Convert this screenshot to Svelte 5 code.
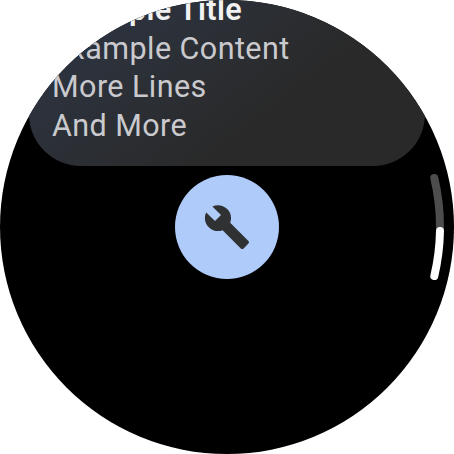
<script>
  const lines = ['Example Content', 'More Lines', 'And More'];
</script>

<main class="watch">
  <section class="card">
    <h1>Example Title</h1>
    {#each lines as line}
      <p>{line}</p>
    {/each}
  </section>

  <button class="action" aria-label="Settings">
    <svg viewBox="0 0 24 24" width="48" height="48" aria-hidden="true">
      <path d="M22.7 19l-9.1-9.1c.9-2.3.4-5-1.5-6.9-2-2-5-2.4-7.4-1.3L9 6 6 9 1.6 4.7C.4 7.1.9 10.1 2.9 12.1c1.9 1.9 4.6 2.4 6.9 1.5l9.1 9.1c.4.4 1 .4 1.4 0l2.3-2.3c.5-.4.5-1.1.1-1.4z" />
    </svg>
  </button>

  <svg class="scroll" viewBox="0 0 454 454" width="454" height="454" aria-hidden="true">
    <path class="track" d="M434.3 178A213 213 0 0 1 440 227" />
    <path class="thumb" d="M440 231A213 213 0 0 1 434.3 276" />
  </svg>
</main>

<style>
  :global(body) {
    background: #fff;
  }

  .watch {
    position: relative;
    display: flex;
    flex-direction: column;
    align-items: center;
    width: 454px;
    height: 454px;
    overflow: hidden;
    border-radius: 50%;
    background: #000;
    font-family: Roboto, sans-serif;
  }

  .card {
    box-sizing: border-box;
    flex: none;
    width: 396px;
    height: 218px;
    margin-top: -52px;
    padding: 43px 23px 0;
    border-radius: 52px;
    background: linear-gradient(142deg, #2d3442 20%, #2b2e33 48%, #292929 68%);
  }

  h1,
  p {
    margin: 0;
    font-size: 30.5px;
    line-height: 38.5px;
    white-space: nowrap;
  }

  h1 {
    color: #f1f1f1;
    font-weight: 600;
    letter-spacing: 0.38px;
  }

  p {
    color: #cacace;
    font-weight: 400;
    letter-spacing: 0.43px;
  }

  .action {
    display: flex;
    flex: none;
    align-items: center;
    justify-content: center;
    width: 104px;
    height: 104px;
    margin: 9px 0 0;
    padding: 0;
    border: 0;
    border-radius: 50%;
    background: #aecbfa;
  }

  .action path {
    fill: #303133;
  }

  .scroll {
    position: absolute;
    inset: 0;
    pointer-events: none;
  }

  .scroll path {
    fill: none;
    stroke-width: 8;
    stroke-linecap: round;
  }

  .scroll .track {
    stroke: #4d4d4d;
  }

  .scroll .thumb {
    stroke: #fff;
  }
</style>
